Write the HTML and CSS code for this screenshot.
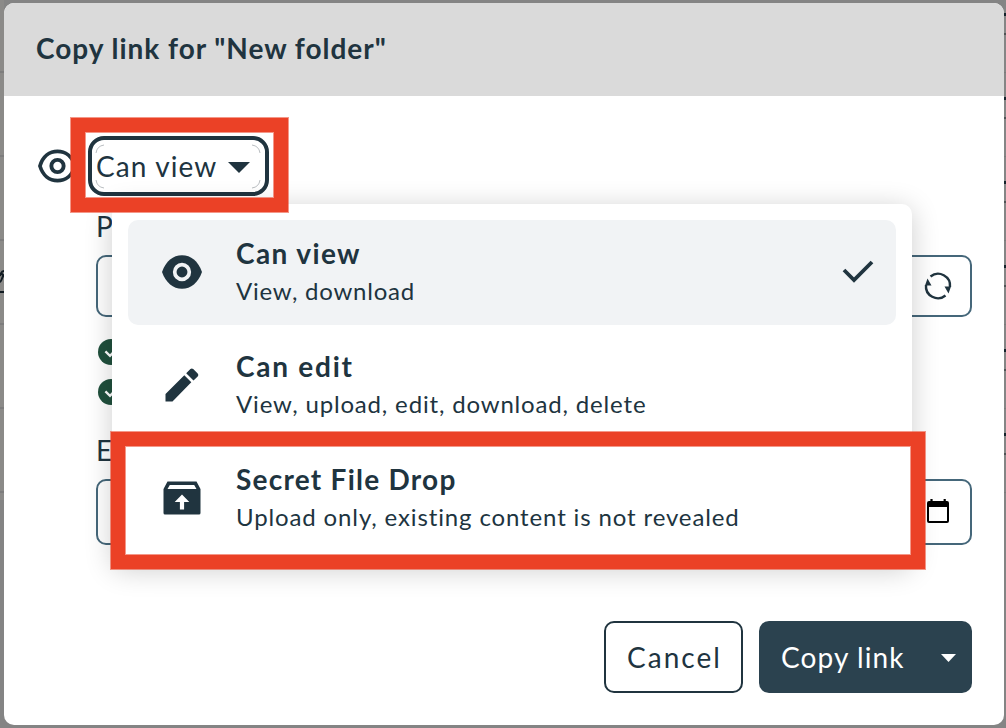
FILE: index.html
```html
<!DOCTYPE html>
<html lang="en">
<head>
<meta charset="utf-8">
<title>Copy link</title>
<link rel="stylesheet" href="styles.css">
</head>
<body>
<div class="edge edge-left"></div>
<svg class="edge-mark" viewBox="0 0 4 26"><path d="M0 7C1 3 2 2 4 2M0 13C2 12 2 7 4 6M1 4l3 3" fill="none" stroke="#111c23" stroke-width="2"/><path d="M0 23h4" stroke="#111c23" stroke-width="2"/></svg>
<div class="edge edge-right"></div>
<main class="modal">
  <header class="modal-header"><h1 class="title">Copy link for "New folder"</h1></header>
  <section class="modal-body">
    <div class="role-row">
      <svg class="eye" viewBox="0 0 40 34"><path d="M2 17C5 7 12 2 20 2s15 5 18 15c-3 10-10 15-18 15S5 27 2 17Z" fill="none" stroke="#20343f" stroke-width="3.800"/><circle cx="20" cy="17" r="6.3" fill="none" stroke="#20343f" stroke-width="4"/></svg>
      <button class="role-button"><span class="role-text">Can view</span><svg class="caret" viewBox="0 0 22 11"><path d="M0 0h22L11 11z" fill="#20343f"/></svg><svg class="corners" viewBox="0 0 166 45"><path d="M1 9Q2 2 9 1M157 1q7 1 8 8M1 36q1 7 8 8M157 44q7-1 8-8" fill="none" stroke="#b9bdc0" stroke-width="1"/></svg></button>
    </div>
    <div class="fields">
      <label class="label">P</label>
      <div class="input input-password">
        <svg class="refresh" viewBox="0 0 28 28"><g fill="none" stroke="#20343f" stroke-width="2.4"><path d="M6.500 4.500A12 12 0 0 1 26 15"/><path d="M21.500 23.500A12 12 0 0 1 2 13"/></g><path d="M20.500 14.500h6.500l-2.500 7zM7.500 13.500H1L3.500 6.500z" fill="#20343f"/></svg>
      </div>
      <div class="rules">
        <svg class="rule" viewBox="0 0 26 26"><circle cx="13" cy="13" r="13" fill="#20503d"/><path d="m7.4 12.4 4.6 4.4L19 9.5" fill="none" stroke="#fff" stroke-width="2.3"/></svg>
        <svg class="rule" viewBox="0 0 26 26"><circle cx="13" cy="13" r="13" fill="#20503d"/><path d="m7.4 12.4 4.6 4.4L19 9.5" fill="none" stroke="#fff" stroke-width="2.3"/></svg>
      </div>
      <label class="label">E</label>
      <div class="input input-date">
        <svg class="calendar" viewBox="0 0 22 24"><path d="M2 2h18q2 0 2 2v18q0 2-2 2H2q-2 0-2-2V4q0-2 2-2zm0 6v14h18V8z" fill="#000" fill-rule="evenodd"/><path d="M4.5 0v4M17.7 0v4" stroke="#000" stroke-width="2.2"/></svg>
      </div>
    </div>
    <footer class="actions">
      <button class="cancel"><span class="cancel-text">Cancel</span></button>
      <button class="copy"><span class="copy-text">Copy link</span><svg class="copy-caret" viewBox="0 0 15 8"><path d="M0 0h15L7.500 8z" fill="#fff"/></svg></button>
    </footer>
  </section>
</main>
<ul class="menu">
  <li class="item item-selected">
    <svg class="item-icon" viewBox="0 0 40 40"><path d="M0 20C4 9 11 3.300 20 3.300S36 9 40 20C36 31 29 36.700 20 36.700S4 31 0 20Z" fill="#20343f"/><circle cx="20" cy="20" r="7.300" fill="#20343f" stroke="#f1f3f5" stroke-width="3.700"/></svg>
    <div class="item-copy"><strong class="name n1">Can view</strong><span class="desc d1">View, download</span></div>
    <svg class="check" viewBox="0 0 32 24"><path d="m2 10 10 10L30 2" fill="none" stroke="#20343f" stroke-width="3.800"/></svg>
  </li>
  <li class="item">
    <svg class="item-icon" viewBox="0 0 40 40"><path d="M3.500 29 22.300 10.200l7 7L10.500 36.600h-7zM24.200 8.300l4.200-4.200q1.400-1.400 2.800 0l4.500 4.500q1.400 1.400 0 2.800l-4.200 4.200z" fill="#20343f"/></svg>
    <div class="item-copy"><strong class="name n2">Can edit</strong><span class="desc d2">View, upload, edit, download, delete</span></div>
  </li>
  <li class="item">
    <svg class="item-icon" viewBox="0 0 40 40"><path d="M5.500 3.500h29l4 7.500v24q0 1.500-1.500 1.500H3Q1.500 36.500 1.500 35V11zM7.800 7l-2.300 4h29l-2.300-4z" fill="#20343f" fill-rule="evenodd"/><path d="m20 16.500 7.300 7.500h-5.200v7.500h-4.200V24h-5.200z" fill="#fff"/></svg>
    <div class="item-copy"><strong class="name n3">Secret File Drop</strong><span class="desc d3">Upload only, existing content is not revealed</span></div>
  </li>
</ul>
<div class="marker marker-role"></div>
<div class="marker marker-drop"></div>
</body>
</html>
```
FILE: styles.css
```css
* { box-sizing: border-box; }
body { margin: 0; width: 1006px; height: 728px; padding: 3px 2px 3px 4px; overflow: hidden; position: relative; background: #848484; color: #20343f; font-family: Lato, sans-serif; }
button { font: inherit; color: inherit; margin: 0; padding: 0; }
svg { display: block; flex: none; overflow: visible; }
span, strong { white-space: nowrap; }
.edge { position: absolute; top: 0; height: 500px; }
.edge-left { left: 0; width: 4px; background: repeating-linear-gradient(#8b8a88 0 71px, #7d7d7d 71px 73px, #8b8a88 73px 84px); }
.edge-right { right: 0; width: 2px; background: repeating-linear-gradient(#858585 0 13px, #14232c 13px 16px, #858585 16px 33px, #4f5355 33px 35px, #858585 35px 72px, #7b7b7b 72px 73px, #858585 73px 84px); }
.edge-mark { position: absolute; left: 0; top: 269px; width: 4px; height: 26px; }
.modal { width: 1000px; height: 722px; position: relative; border-radius: 10px; background: #fff; overflow: hidden; }
.modal-header { height: 93px; padding: 0 32px 3px; display: flex; align-items: center; background: #dadada; }
.title { margin: 0; font-size: 28px; line-height: 34px; font-weight: 700; letter-spacing: .97px; white-space: nowrap; }
.modal-body { padding: 40px 32px 0; }
.role-row { display: flex; align-items: center; gap: 11px; padding-left: 2px; height: 60px; }
.eye { width: 39px; height: 34px; }
.role-button { position: relative; width: 181px; height: 60px; border: 4px solid #20343f; border-radius: 16px; padding-left: 4px; background: #fff; display: flex; align-items: center; gap: 11px; }
.corners { position: absolute; left: 3px; top: 4px; width: 166px; height: 45px; }
.role-text, .cancel-text, .copy-text { font-size: 28px; line-height: 34px; }
.role-text { letter-spacing: 1.1px; }
.cancel-text { letter-spacing: 2px; margin-right: -2px; }
.copy-text { letter-spacing: 1.1px; }
.caret { width: 22px; height: 11px; margin-top: 2px; }
.fields { padding-left: 60px; padding-top: 13px; }
.label { display: block; font-size: 28px; line-height: 34px; }
.input { border: 2px solid #45677a; border-radius: 10px; display: flex; align-items: center; justify-content: flex-end; }
.input-password { height: 62px; margin-top: 12px; padding-right: 18px; }
.refresh { width: 28px; height: 28px; }
.rules { padding: 22px 0 0 2px; display: flex; flex-direction: column; gap: 14px; }
.rule { width: 26px; height: 26px; }
.rules + .label { margin-top: 28px; }
.input-date { height: 66px; margin-top: 12px; padding-right: 21px; }
.calendar { width: 22px; height: 24px; margin-bottom: 2px; }
.actions { display: flex; justify-content: flex-end; gap: 16px; margin-top: 76px; }
.cancel { width: 139px; height: 72px; border: 2px solid #20343f; border-radius: 10px; background: #fff; }
.copy { width: 213px; height: 72px; border: 0; border-radius: 10px; background: #2b424f; color: #fff; display: flex; align-items: center; justify-content: space-between; padding: 0 16px 0 22px; }
.copy-caret { width: 15px; height: 8px; margin-top: 2px; }
.menu { position: absolute; left: 112px; top: 204px; width: 800px; height: 362px; margin: 0; padding: 16px; list-style: none; display: flex; flex-direction: column; gap: 8px; border-radius: 10px; background: #fff; box-shadow: 0 4px 28px rgba(0,0,0,.2); }
.item { height: 105px; display: flex; align-items: center; padding: 0 22px 0 34px; border-radius: 10px; }
.item-selected { background: #f1f3f5; }
.item-icon { width: 40px; height: 40px; }
.item-copy { margin-left: 34px; flex: 1; display: flex; flex-direction: column; align-items: flex-start; }
.name { font-size: 28px; line-height: 36px; padding-bottom: 2px; font-weight: 700; }
.n1 { letter-spacing: 1.4px; }
.n2 { letter-spacing: 1.75px; }
.n3 { letter-spacing: 1.25px; }
.desc { font-size: 24px; line-height: 36px; }
.d1 { letter-spacing: .77px; }
.d2 { letter-spacing: .83px; }
.d3 { letter-spacing: .87px; }
.check { width: 32px; height: 24px; }
.marker { position: absolute; border: 14px solid #eb4126; outline: 1px solid rgba(235,65,38,.55); box-shadow: inset 0 0 0 1px rgba(235,65,38,.55); }
.marker-role { left: 71px; top: 118px; width: 217px; height: 94px; }
.marker-drop { left: 111px; top: 432px; width: 814px; height: 137px; }
```
